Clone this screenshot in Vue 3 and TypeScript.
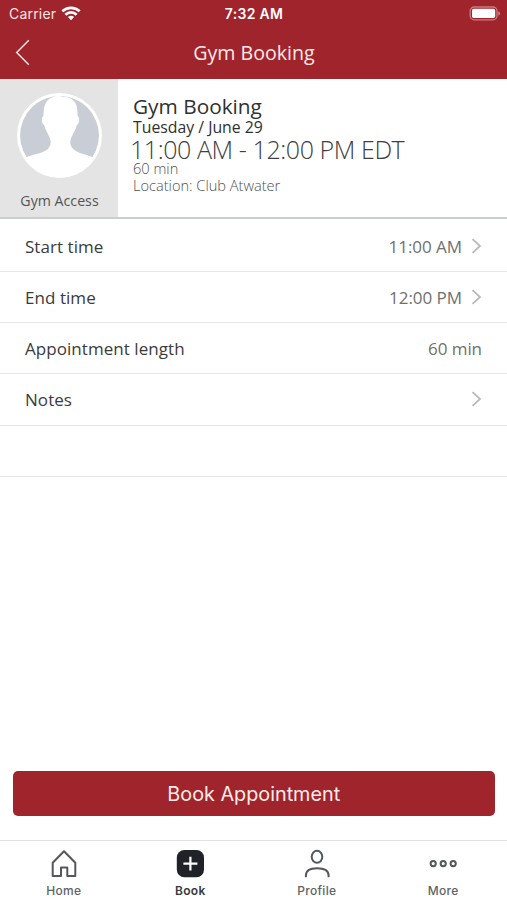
<script setup lang="ts">
interface DetailRow {
  label: string
  value: string
  link: boolean
}

interface Tab {
  id: 'home' | 'book' | 'profile' | 'more'
  label: string
}

const rows: DetailRow[] = [
  { label: 'Start time', value: '11:00 AM', link: true },
  { label: 'End time', value: '12:00 PM', link: true },
  { label: 'Appointment length', value: '60 min', link: false },
  { label: 'Notes', value: '', link: true },
  { label: '', value: '', link: false },
]

const tabs: Tab[] = [
  { id: 'home', label: 'Home' },
  { id: 'book', label: 'Book' },
  { id: 'profile', label: 'Profile' },
  { id: 'more', label: 'More' },
]

const activeTab: Tab['id'] = 'book'
</script>

<template>
  <div class="screen">
    <header class="top">
      <div class="status">
        <div class="carrier">
          <span>Carrier</span>
          <svg class="wifi" width="20" height="15" viewBox="0 0 20 15">
            <g fill="none" stroke="#fff" stroke-width="2.7">
              <path d="M1.3 5.3C6.2 .7 13.8 .7 18.7 5.3" />
              <path d="M4.4 8.7C7.6 5.6 12.4 5.6 15.6 8.7" />
            </g>
            <path d="M6.9 11.1Q10 8.5 13.1 11.1L10 14.3Z" fill="#fff" />
          </svg>
        </div>
        <span class="clock">7:32 AM</span>
        <svg class="battery" width="32" height="16" viewBox="0 0 32 16">
          <rect x="1.2" y="1" width="26.8" height="12.8" rx="4" fill="none" stroke="#c97c82" stroke-width="1.3" />
          <rect x="3" y="2.7" width="23.2" height="9.4" rx="1.8" fill="#fff" />
          <path d="M29.2 5.2Q31.2 6 31.2 7.5T29.2 9.8Z" fill="#c97c82" />
        </svg>
      </div>
      <div class="nav">
        <svg class="back" width="16" height="28" viewBox="0 0 16 28">
          <path d="M13.8 1.3L1.7 13.5L13.8 25.7" fill="none" stroke="#fbe4e3" stroke-width="1.5" />
        </svg>
        <h1>Gym Booking</h1>
      </div>
    </header>

    <section class="summary">
      <div class="staff">
        <svg width="85" height="85" viewBox="0 0 86 86">
          <circle cx="43" cy="43" r="43" fill="#fff" />
          <circle cx="43" cy="43" r="39.9" fill="#c9ced6" />
          <path
            d="M8 65.6C17 61.5 25 62 31 57C35 53 34.5 48.5 33 45C31 40.5 28.5 37.5 27.6 32.5C25 31.5 24 24.5 26.8 23.3C26.8 13 29 7 35.5 4.5C39 2.4 44 2.6 47 4.2C49.5 3.9 51.5 4.4 54 5.6C59.8 8 61.6 14 61.2 23.3C64 24.5 63 31.5 60.4 32.5C59.5 37.5 57 40.5 55 45C53.5 48.5 53 53 57 57C62.5 62 69 61.5 78 65.6A41.7 41.7 0 0 1 8 65.6Z"
            fill="#fff"
          />
        </svg>
        <span>Gym Access</span>
      </div>
      <div class="info">
        <h2>Gym Booking</h2>
        <p class="date">Tuesday / June 29</p>
        <p class="hours">11:00 AM - 12:00 PM EDT</p>
        <p class="duration">60 min</p>
        <p class="place">Location: Club Atwater</p>
      </div>
    </section>

    <main class="rows">
      <div v-for="(row, i) in rows" :key="i" class="row">
        <span class="label">{{ row.label }}</span>
        <span class="value">{{ row.value }}</span>
        <svg v-if="row.link" class="chevron" width="11" height="16" viewBox="0 0 11 16">
          <path d="M1.5 1.2L9 8L1.5 14.8" fill="none" stroke="#b9b9b9" stroke-width="1.8" />
        </svg>
      </div>
    </main>

    <button class="book" type="button">Book Appointment</button>

    <nav class="tabs">
      <div v-for="tab in tabs" :key="tab.id" class="tab" :class="{ active: tab.id === activeTab }">
        <svg width="30" height="30" viewBox="0 0 30 30" fill="none" stroke="#54575b" stroke-width="2">
          <path
            v-if="tab.id === 'home'"
            d="M15 2.2L26.3 13.7V27.1H18.3V18.6H12V27.1H3.7V13.7Z"
            stroke-linejoin="round"
          />
          <template v-else-if="tab.id === 'book'">
            <rect x="1.8" y="1" width="27.2" height="27.2" rx="7.5" fill="#1f2226" stroke="none" />
            <path d="M15.4 7.8V21.4M8.4 14.6H22.4" stroke="#fff" stroke-width="2.2" />
          </template>
          <template v-else-if="tab.id === 'profile'">
            <ellipse cx="15" cy="7.8" rx="5.3" ry="6" />
            <path d="M3.9 28.2V26.6C3.9 21.7 7.6 19.2 15 19.2S26.6 21.7 26.6 26.6V28.2" />
          </template>
          <template v-else>
            <circle cx="5.2" cy="14.6" r="2.6" />
            <circle cx="15.2" cy="14.6" r="2.6" />
            <circle cx="25.2" cy="14.6" r="2.6" />
          </template>
        </svg>
        <span>{{ tab.label }}</span>
      </div>
    </nav>
  </div>
</template>

<style>
body {
  margin: 0;
  background: #fff;
}
</style>

<style scoped>
.screen {
  box-sizing: border-box;
  width: 507px;
  height: 900px;
  display: flex;
  flex-direction: column;
  overflow: hidden;
  background: #fff;
  font-family: 'Open Sans', 'Noto Sans', sans-serif;
}
h1,
h2,
p {
  margin: 0;
  font-weight: 400;
  white-space: nowrap;
}
svg {
  display: block;
  flex: none;
}
.top {
  height: 79px;
  flex: none;
  background: #a0242c;
  color: #fff;
}
.status {
  height: 27px;
  display: grid;
  grid-template-columns: 1fr auto 1fr;
  align-items: center;
  padding: 0 6px 0 9px;
  font-family: Inter, sans-serif;
}
.carrier {
  display: flex;
  align-items: center;
  gap: 5px;
  font-size: 14px;
  letter-spacing: 0.2px;
  color: #fbe4e3;
}
.clock {
  margin-left: -2px;
  font-size: 14px;
  font-weight: 600;
  letter-spacing: 0.3px;
}
.battery {
  justify-self: end;
}
.nav {
  height: 52px;
  display: grid;
  grid-template-columns: 1fr auto 1fr;
  align-items: center;
  padding-left: 15px;
  padding-right: 14px;
}
.nav h1 {
  font-size: 19.6px;
  line-height: 50px;
  color: #fde9e8;
}
.summary {
  height: 138px;
  flex: none;
  display: flex;
  border-bottom: 2px solid #cbcecf;
}
.staff {
  width: 118px;
  display: flex;
  flex-direction: column;
  align-items: center;
  padding: 14px 0 0 1px;
  box-sizing: border-box;
  background: #e4e4e4;
}
.staff span {
  margin-top: 13px;
  font-size: 14.2px;
  line-height: 20px;
  color: #555;
}
.info {
  padding: 14px 0 0 15px;
}
.info h2 {
  font-size: 20.8px;
  line-height: 26px;
  color: #303030;
}
.date {
  font-size: 15.8px;
  line-height: 16px;
  color: #303030;
}
.hours {
  margin-left: -3px;
  font-size: 25px;
  font-weight: 300;
  line-height: 28px;
  letter-spacing: -0.42px;
  color: #404040;
}
.duration,
.place {
  font-size: 14.6px;
  font-weight: 300;
  line-height: 17px;
  color: #505050;
}
.duration {
  line-height: 10px;
}
.place {
  margin-top: 4px;
}
.rows {
  flex: 1;
  padding-top: 1.6px;
}
.row {
  box-sizing: border-box;
  height: 51.3px;
  display: flex;
  align-items: center;
  padding: 0.6px 25px 0;
  border-bottom: 1px solid #e6e6e6;
  font-size: 17px;
}
.label {
  flex: 1;
  letter-spacing: 0.05px;
  color: #3b3b3b;
}
.value {
  letter-spacing: -0.05px;
  color: #707070;
}
.chevron {
  margin: -1px 0 0 9px;
}
.book {
  height: 45px;
  flex: none;
  margin: 0 12.5px 24.5px 13px;
  padding: 1px 0 0;
  border: 0;
  border-radius: 5px;
  background: #a0242c;
  color: #fdeceb;
  font-family: Inter, sans-serif;
  font-size: 19.8px;
}
.tabs {
  box-sizing: border-box;
  height: 60px;
  flex: none;
  display: grid;
  grid-template-columns: repeat(4, 126.5px);
  justify-content: center;
  border-top: 1px solid #e0e2e3;
  padding: 8px 0 0;
}
.tab {
  display: flex;
  flex-direction: column;
  align-items: center;
  gap: 4px;
  font-family: Inter, sans-serif;
  font-size: 12px;
  font-weight: 500;
  line-height: 16px;
  letter-spacing: 0.3px;
  color: #606366;
}
.tab.active {
  font-weight: 600;
  color: #36393c;
}
</style>
